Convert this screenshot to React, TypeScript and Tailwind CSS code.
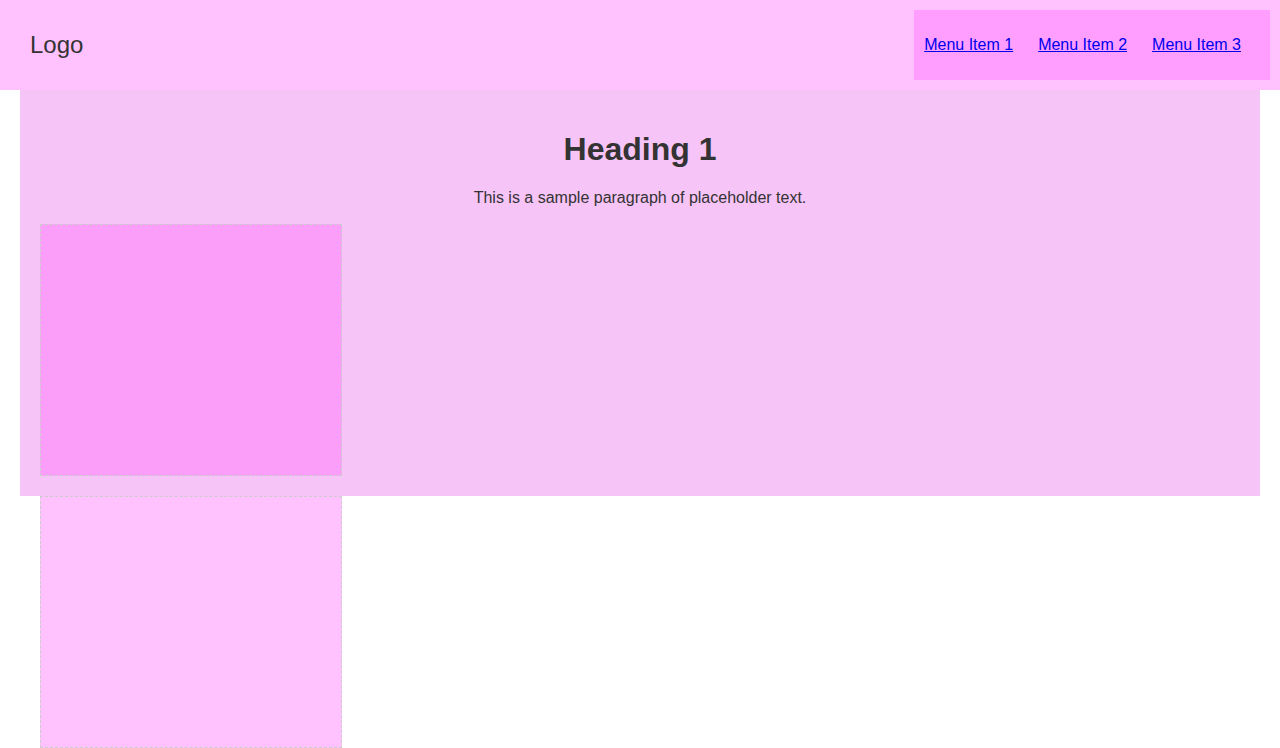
export default function App() {
  return (
    <div className="min-h-screen bg-white text-[#333] font-['Liberation_Sans',Arial,sans-serif]">
      {/* Header */}
      <header className="flex h-[90px] items-center justify-between bg-[#ffc2ff] pl-[30px] pr-[10px]">
        <div className="text-[24px]">Logo</div>
        <nav className="flex h-[70px] items-center bg-[#ff9eff] pl-[10px] pr-[29px]">
          <ul className="flex gap-[25px] text-[16px]">
            <li><a href="#" className="text-[#0000ee] underline">Menu Item 1</a></li>
            <li><a href="#" className="text-[#0000ee] underline">Menu Item 2</a></li>
            <li><a href="#" className="text-[#0000ee] underline">Menu Item 3</a></li>
          </ul>
        </nav>
      </header>

      {/* Hero */}
      <section className="mx-[20px] bg-[#f7c4f7] p-[20px] text-center">
        <h1 className="my-[21px] text-[32px] leading-[37px] font-bold">Heading 1</h1>
        <p className="mb-[17px] text-[16px] leading-[18px]">This is a sample paragraph of placeholder text.</p>
        <div className="h-[252px] w-[302px] border border-dashed border-[#ccc] bg-[#fa9efa]"></div>
      </section>

      <div className="ml-[40px] h-[252px] w-[302px] border border-dashed border-[#ccc] bg-[#ffc2ff]"></div>
    </div>
  )
}
